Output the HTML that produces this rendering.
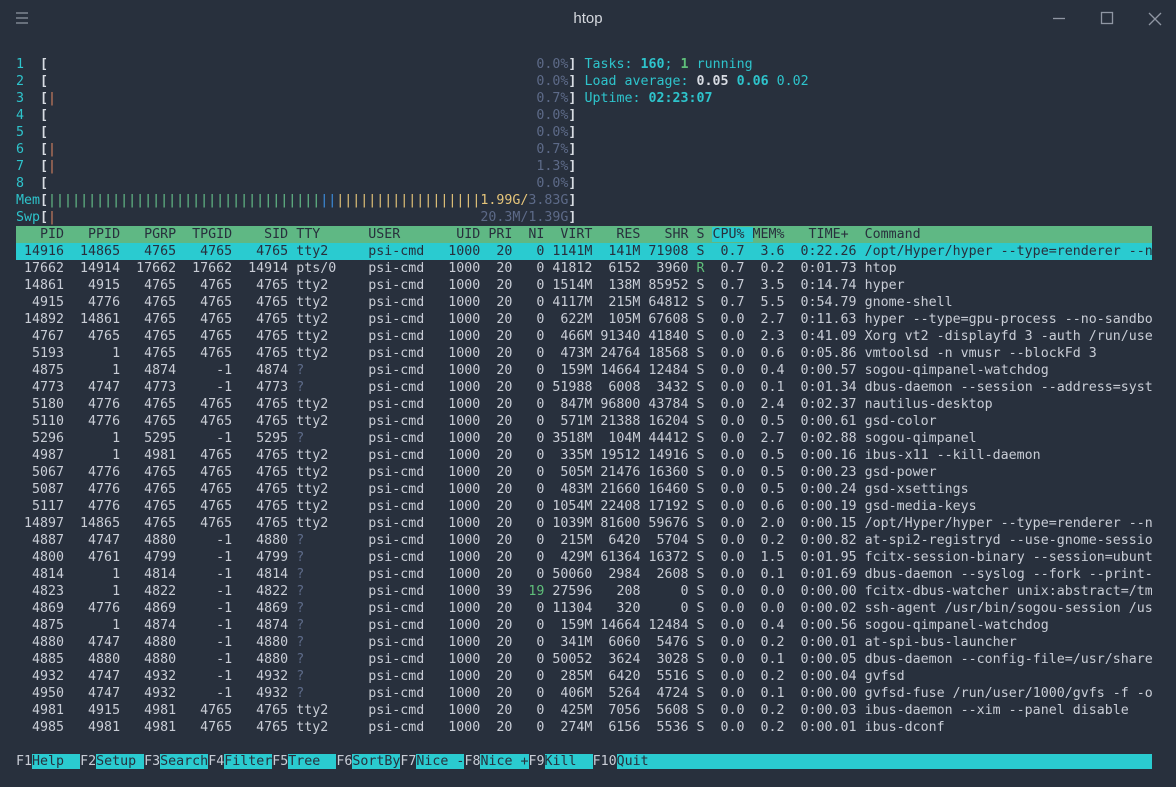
<!DOCTYPE html>
<html><head><meta charset="utf-8"><style>
html,body{margin:0;padding:0;background:#28303d;width:1176px;height:787px;overflow:hidden}
#t{position:absolute;left:16px;top:56px;font-family:"DejaVu Sans Mono","Liberation Mono",monospace;font-size:13.3px;line-height:17px;color:#c9cdd6;white-space:pre}
.l{height:17px;display:block;width:1136px;overflow:hidden}
.c{color:#2ec4cc}.cb{color:#2ec4cc;font-weight:bold}.w{color:#d8dce3;font-weight:bold}
.d{color:#5d6a88}.o{color:#d0805f}.g{color:#66c08a}.b{color:#3d8fe0}.y{color:#e6c57a}
.gb{color:#5fbf7a;font-weight:bold}.gr{color:#5fbf7a}
.hd{background:#5fb884;color:#28303d}.sel{background:#2acbd0;color:#28303d}.hc{background:#2acbd0}
.fk{color:#c9cdd6}.fl{background:#2acbd0;color:#28303d}
#title{position:absolute;top:10px;left:0;width:1176px;text-align:center;font-family:"Liberation Sans",sans-serif;font-size:15px;color:#d5d8de}
</style></head><body>
<svg width="1176" height="40" style="position:absolute;left:0;top:0" fill="none" stroke="#8f96a3" stroke-width="1.3">
<path d="M16 13h12M16 18h12M16 23h12"/>
<path d="M1053 18.5h12"/>
<rect x="1101.5" y="12.5" width="11" height="11"/>
<path d="M1149 13l12 12M1161 13l-12 12"/>
</svg>
<div id="title">htop</div>
<div id="t"><span class="l"><span class="c">1</span>  <span class="w">[</span>                                                             <span class="d">0.0%</span><span class="w">]</span> <span class="c">Tasks: </span><span class="cb">160</span><span class="c">; </span><span class="gb">1</span><span class="c"> running</span></span><span class="l"><span class="c">2</span>  <span class="w">[</span>                                                             <span class="d">0.0%</span><span class="w">]</span> <span class="c">Load average: </span><span class="w">0.05 </span><span class="cb">0.06 </span><span class="c">0.02</span></span><span class="l"><span class="c">3</span>  <span class="w">[</span><span class="o">|</span>                                                            <span class="d">0.7%</span><span class="w">]</span> <span class="c">Uptime: </span><span class="cb">02:23:07</span></span><span class="l"><span class="c">4</span>  <span class="w">[</span>                                                             <span class="d">0.0%</span><span class="w">]</span></span><span class="l"><span class="c">5</span>  <span class="w">[</span>                                                             <span class="d">0.0%</span><span class="w">]</span></span><span class="l"><span class="c">6</span>  <span class="w">[</span><span class="o">|</span>                                                            <span class="d">0.7%</span><span class="w">]</span></span><span class="l"><span class="c">7</span>  <span class="w">[</span><span class="o">|</span>                                                            <span class="d">1.3%</span><span class="w">]</span></span><span class="l"><span class="c">8</span>  <span class="w">[</span>                                                             <span class="d">0.0%</span><span class="w">]</span></span><span class="l"><span class="c">Mem</span><span class="w">[</span><span class="g">||||||||||||||||||||||||||||||||||</span><span class="b">||</span><span class="y">||||||||||||||||||1.99G/</span><span class="d">3.83G</span><span class="w">]</span></span><span class="l"><span class="c">Swp</span><span class="w">[</span><span class="o">|</span>                                                     <span class="d">20.3M/1.39G</span><span class="w">]</span></span><span class="l hd">   PID   PPID   PGRP  TPGID    SID TTY      USER       UID PRI  NI  VIRT   RES   SHR S <span class="hc">CPU% </span>MEM%   TIME+  Command                             </span><span class="l sel"> 14916  14865   4765   4765   4765 tty2     psi-cmd   1000  20   0 1141M  141M 71908 S  0.7  3.6  0:22.26 /opt/Hyper/hyper --type=renderer --n</span><span class="l"> 17662  14914  17662  17662  14914 pts/0    psi-cmd   1000  20   0 41812  6152  3960 <span class="gr">R</span>  0.7  0.2  0:01.73 htop</span><span class="l"> 14861   4915   4765   4765   4765 tty2     psi-cmd   1000  20   0 1514M  138M 85952 S  0.7  3.5  0:14.74 hyper</span><span class="l">  4915   4776   4765   4765   4765 tty2     psi-cmd   1000  20   0 4117M  215M 64812 S  0.7  5.5  0:54.79 gnome-shell</span><span class="l"> 14892  14861   4765   4765   4765 tty2     psi-cmd   1000  20   0  622M  105M 67608 S  0.0  2.7  0:11.63 hyper --type=gpu-process --no-sandbo</span><span class="l">  4767   4765   4765   4765   4765 tty2     psi-cmd   1000  20   0  466M 91340 41840 S  0.0  2.3  0:41.09 Xorg vt2 -displayfd 3 -auth /run/use</span><span class="l">  5193      1   4765   4765   4765 tty2     psi-cmd   1000  20   0  473M 24764 18568 S  0.0  0.6  0:05.86 vmtoolsd -n vmusr --blockFd 3</span><span class="l">  4875      1   4874     -1   4874 <span class="d">?</span>        psi-cmd   1000  20   0  159M 14664 12484 S  0.0  0.4  0:00.57 sogou-qimpanel-watchdog</span><span class="l">  4773   4747   4773     -1   4773 <span class="d">?</span>        psi-cmd   1000  20   0 51988  6008  3432 S  0.0  0.1  0:01.34 dbus-daemon --session --address=syst</span><span class="l">  5180   4776   4765   4765   4765 tty2     psi-cmd   1000  20   0  847M 96800 43784 S  0.0  2.4  0:02.37 nautilus-desktop</span><span class="l">  5110   4776   4765   4765   4765 tty2     psi-cmd   1000  20   0  571M 21388 16204 S  0.0  0.5  0:00.61 gsd-color</span><span class="l">  5296      1   5295     -1   5295 <span class="d">?</span>        psi-cmd   1000  20   0 3518M  104M 44412 S  0.0  2.7  0:02.88 sogou-qimpanel</span><span class="l">  4987      1   4981   4765   4765 tty2     psi-cmd   1000  20   0  335M 19512 14916 S  0.0  0.5  0:00.16 ibus-x11 --kill-daemon</span><span class="l">  5067   4776   4765   4765   4765 tty2     psi-cmd   1000  20   0  505M 21476 16360 S  0.0  0.5  0:00.23 gsd-power</span><span class="l">  5087   4776   4765   4765   4765 tty2     psi-cmd   1000  20   0  483M 21660 16460 S  0.0  0.5  0:00.24 gsd-xsettings</span><span class="l">  5117   4776   4765   4765   4765 tty2     psi-cmd   1000  20   0 1054M 22408 17192 S  0.0  0.6  0:00.19 gsd-media-keys</span><span class="l"> 14897  14865   4765   4765   4765 tty2     psi-cmd   1000  20   0 1039M 81600 59676 S  0.0  2.0  0:00.15 /opt/Hyper/hyper --type=renderer --n</span><span class="l">  4887   4747   4880     -1   4880 <span class="d">?</span>        psi-cmd   1000  20   0  215M  6420  5704 S  0.0  0.2  0:00.82 at-spi2-registryd --use-gnome-sessio</span><span class="l">  4800   4761   4799     -1   4799 <span class="d">?</span>        psi-cmd   1000  20   0  429M 61364 16372 S  0.0  1.5  0:01.95 fcitx-session-binary --session=ubunt</span><span class="l">  4814      1   4814     -1   4814 <span class="d">?</span>        psi-cmd   1000  20   0 50060  2984  2608 S  0.0  0.1  0:01.69 dbus-daemon --syslog --fork --print-</span><span class="l">  4823      1   4822     -1   4822 <span class="d">?</span>        psi-cmd   1000  39  <span class="gr">19</span> 27596   208     0 S  0.0  0.0  0:00.00 fcitx-dbus-watcher unix:abstract=/tm</span><span class="l">  4869   4776   4869     -1   4869 <span class="d">?</span>        psi-cmd   1000  20   0 11304   320     0 S  0.0  0.0  0:00.02 ssh-agent /usr/bin/sogou-session /us</span><span class="l">  4875      1   4874     -1   4874 <span class="d">?</span>        psi-cmd   1000  20   0  159M 14664 12484 S  0.0  0.4  0:00.56 sogou-qimpanel-watchdog</span><span class="l">  4880   4747   4880     -1   4880 <span class="d">?</span>        psi-cmd   1000  20   0  341M  6060  5476 S  0.0  0.2  0:00.01 at-spi-bus-launcher</span><span class="l">  4885   4880   4880     -1   4880 <span class="d">?</span>        psi-cmd   1000  20   0 50052  3624  3028 S  0.0  0.1  0:00.05 dbus-daemon --config-file=/usr/share</span><span class="l">  4932   4747   4932     -1   4932 <span class="d">?</span>        psi-cmd   1000  20   0  285M  6420  5516 S  0.0  0.2  0:00.04 gvfsd</span><span class="l">  4950   4747   4932     -1   4932 <span class="d">?</span>        psi-cmd   1000  20   0  406M  5264  4724 S  0.0  0.1  0:00.00 gvfsd-fuse /run/user/1000/gvfs -f -o</span><span class="l">  4981   4915   4981   4765   4765 tty2     psi-cmd   1000  20   0  425M  7056  5608 S  0.0  0.2  0:00.03 ibus-daemon --xim --panel disable</span><span class="l">  4985   4981   4981   4765   4765 tty2     psi-cmd   1000  20   0  274M  6156  5536 S  0.0  0.2  0:00.01 ibus-dconf</span><span class="l"> </span><span class="l"><span class="fk">F1</span><span class="fl">Help  </span><span class="fk">F2</span><span class="fl">Setup </span><span class="fk">F3</span><span class="fl">Search</span><span class="fk">F4</span><span class="fl">Filter</span><span class="fk">F5</span><span class="fl">Tree  </span><span class="fk">F6</span><span class="fl">SortBy</span><span class="fk">F7</span><span class="fl">Nice -</span><span class="fk">F8</span><span class="fl">Nice +</span><span class="fk">F9</span><span class="fl">Kill  </span><span class="fk">F10</span><span class="fl">Quit                                                               </span></span></div>
</body></html>
